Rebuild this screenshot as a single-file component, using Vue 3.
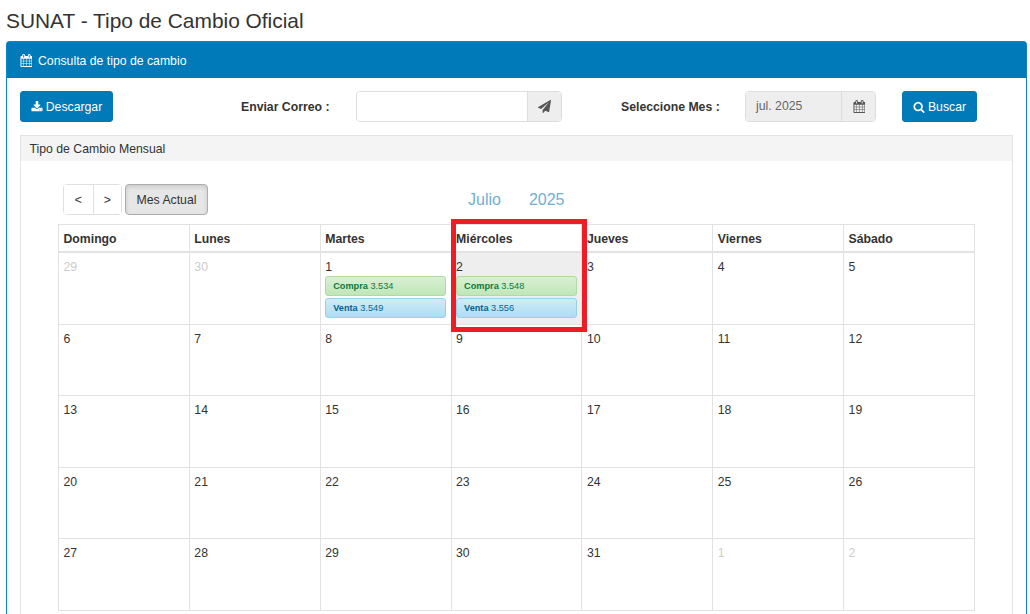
<script setup>
const days = ['Domingo', 'Lunes', 'Martes', 'Miércoles', 'Jueves', 'Viernes', 'Sábado']
const rates = {
  1: { compra: '3.534', venta: '3.549' },
  2: { compra: '3.548', venta: '3.556' }
}
const cell = (n, muted = false) => ({ n, muted, today: n === 2 && !muted, rate: muted ? null : rates[n] })
const weeks = [
  [cell(29, true), cell(30, true), cell(1), cell(2), cell(3), cell(4), cell(5)],
  [6, 7, 8, 9, 10, 11, 12].map((n) => cell(n)),
  [13, 14, 15, 16, 17, 18, 19].map((n) => cell(n)),
  [20, 21, 22, 23, 24, 25, 26].map((n) => cell(n)),
  [cell(27), cell(28), cell(29), cell(30), cell(31), cell(1, true), cell(2, true)]
]
const calendarPath = 'M192 1664h288v-288h-288v288zm352 0h320v-288h-320v288zm-352-352h288v-320h-288v320zm352 0h320v-320h-320v320zm-352-384h288v-288h-288v288zm736 736h320v-288h-320v288zm-384-736h320v-288h-320v288zm768 736h288v-288h-288v288zm-384-352h320v-320h-320v320zm-352-864v-288q0-13-9.500-22.500t-22.500-9.500h-64q-13 0-22.500 9.500t-9.500 22.500v288q0 13 9.500 22.500t22.500 9.500h64q13 0 22.500-9.500t9.500-22.500zm736 864h288v-320h-288v320zm-384-384h320v-288h-320v288zm384 0h288v-288h-288v288zm32-480v-288q0-13-9.500-22.500t-22.500-9.500h-64q-13 0-22.500 9.500t-9.500 22.500v288q0 13 9.500 22.500t22.500 9.500h64q13 0 22.500-9.500t9.500-22.500zm384-64v1280q0 52-38 90t-90 38h-1408q-52 0-90-38t-38-90v-1280q0-52 38-90t90-38h128v-96q0-66 47-113t113-47h64q66 0 113 47t47 113v96h384v-96q0-66 47-113t113-47h64q66 0 113 47t47 113v96h128q52 0 90 38t38 90z'
const downloadPath = 'M1344 1344q0-26-19-45t-45-19-45 19-19 45 19 45 45 19 45-19 19-45zm256 0q0-26-19-45t-45-19-45 19-19 45 19 45 45 19 45-19 19-45zm128-224v320q0 40-28 68t-68 28h-1472q-40 0-68-28t-28-68v-320q0-40 28-68t68-28h465l135 136q58 56 136 56t136-56l136-136h464q40 0 68 28t28 68zm-325-569q17 41-14 70l-448 448q-18 19-45 19t-45-19l-448-448q-31-29-14-70 17-39 59-39h256v-448q0-26 19-45t45-19h256q26 0 45 19t19 45v448h256q42 0 59 39z'
const planePath = 'M1764 11q33 24 27 64l-256 1536q-5 29-32 45-14 8-31 8-11 0-24-5l-453-185-242 295q-18 23-49 23-13 0-22-4-19-7-30.500-23.500t-11.500-36.500v-349l864-1059-1069 925-395-162q-37-14-40-55-2-40 32-59l1664-960q15-9 32-9 20 0 36 11z'
const searchPath = 'M1216 832q0-185-131.500-316.500t-316.500-131.500-316.500 131.500-131.500 316.500 131.500 316.500 316.500 131.500 316.500-131.500 131.500-316.500zm512 832q0 52-38 90t-90 38q-54 0-90-38l-343-342q-179 124-399 124-143 0-273.500-55.500t-225-150-150-225-55.500-273.500 55.500-273.500 150-225 225-150 273.500-55.500 273.500 55.500 225 150 150 225 55.500 273.500q0 220-124 399l343 343q37 37 37 90z'
</script>

<template>
  <div class="page">
    <h1 class="title">SUNAT - Tipo de Cambio Oficial</h1>
    <section class="panel">
      <header class="panel-head">
        <svg class="ico" viewBox="0 0 1664 1792" width="12" height="13"><path :d="calendarPath" /></svg>
        <span>Consulta de tipo de cambio</span>
      </header>
      <div class="panel-body">
        <div class="toolbar">
          <button class="btn-primary descargar">
            <svg class="ico" viewBox="0 0 1792 1792" width="12" height="12"><path :d="downloadPath" /></svg>
            Descargar
          </button>
          <label class="lbl lbl-mail">Enviar Correo :</label>
          <div class="group group-mail">
            <div class="field"></div>
            <span class="addon"><svg class="ico" viewBox="0 0 1792 1792" width="13" height="13"><path :d="planePath" /></svg></span>
          </div>
          <label class="lbl lbl-month">Seleccione Mes :</label>
          <div class="group group-month">
            <div class="field readonly">jul. 2025</div>
            <span class="addon"><svg class="ico" viewBox="0 0 1664 1792" width="12" height="13"><path :d="calendarPath" /></svg></span>
          </div>
          <button class="btn-primary buscar">
            <svg class="ico" viewBox="0 0 1792 1792" width="12" height="12"><path :d="searchPath" /></svg>
            Buscar
          </button>
        </div>

        <section class="inner">
          <header class="inner-head">Tipo de Cambio Mensual</header>
          <div class="inner-body">
            <div class="cal-toolbar">
              <div class="nav">
                <button class="nav-btn">&lt;</button>
                <button class="nav-btn">&gt;</button>
              </div>
              <button class="today-btn">Mes Actual</button>
              <div class="cal-title"><span>Julio</span><span>2025</span></div>
            </div>
            <div class="cal-wrap">
              <table class="cal">
                <thead>
                  <tr><th v-for="d in days" :key="d">{{ d }}</th></tr>
                </thead>
                <tbody>
                  <tr v-for="(w, i) in weeks" :key="i">
                    <td v-for="(c, j) in w" :key="j" :class="{ today: c.today }">
                      <div class="num" :class="{ muted: c.muted }">{{ c.n }}</div>
                      <template v-if="c.rate">
                        <div class="ev green"><b>Compra</b> {{ c.rate.compra }}</div>
                        <div class="ev blue"><b>Venta</b> {{ c.rate.venta }}</div>
                      </template>
                    </td>
                  </tr>
                </tbody>
              </table>
              <div class="highlight"></div>
            </div>
          </div>
        </section>
      </div>
    </section>
  </div>
</template>

<style>
html, body { overflow: hidden; background: #fff; }
</style>

<style scoped>
.page {
  width: 1030px;
  height: 614px;
  overflow: hidden;
  box-sizing: border-box;
  padding: 0 3px 0 6px;
  font-family: "Liberation Sans", Arial, sans-serif;
  font-size: 12.25px;
  color: #333;
}
.title {
  margin: 0;
  height: 41px;
  line-height: 42px;
  font-size: 20.9px;
  font-weight: 400;
  color: #333;
}
.ico { fill: currentColor; display: inline-block; flex: none; }
.panel {
  border: 1px solid #0a85c7;
  border-radius: 4px 4px 0 0;
  border-bottom: 0;
  height: 600px;
}
.panel-head {
  box-sizing: border-box;
  height: 36px;
  background: #007ab8;
  color: #fff;
  display: flex;
  align-items: center;
  gap: 6px;
  padding: 1px 0 0 13px;
  font-size: 12.25px;
}
.panel-body { padding: 13px 13px 0; }
.toolbar { display: flex; align-items: center; height: 31px; }
.btn-primary {
  display: flex;
  align-items: center;
  justify-content: center;
  gap: 3px;
  height: 31px;
  padding: 0;
  border: 1px solid #0a78b0;
  border-radius: 3px;
  background: #007ab8;
  color: #fff;
  font: 12.25px "Liberation Sans", Arial, sans-serif;
}
.descargar { width: 93px; }
.buscar { width: 75px; margin-left: 26px; }
.lbl { font-weight: 700; font-size: 12.25px; color: #333; white-space: nowrap; }
.lbl-mail { margin-left: 128px; width: 115px; }
.lbl-month { margin-left: 59px; width: 124px; }
.group { display: flex; height: 31px; box-sizing: border-box; border: 1px solid #ddd; border-radius: 4px; overflow: hidden; }
.group-mail { width: 206px; }
.group-month { width: 131px; }
.field { flex: 1; background: #fff; box-sizing: border-box; padding-left: 10px; line-height: 29px; font-size: 12.25px; color: #666; }
.field.readonly { background: #eee; }
.addon { width: 33px; display: flex; align-items: center; justify-content: center; background: #eee; border-left: 1px solid #ddd; color: #555; }
.inner { margin-top: 13px; border: 1px solid #e3e3e3; border-bottom: 0; height: 600px; }
.inner-head { height: 25px; line-height: 26px; background: #f4f4f4; padding-left: 8.500px; font-size: 12.25px; }
.inner-body { padding: 23px 38px 0 37px; }
.cal-toolbar { position: relative; display: flex; align-items: center; height: 31px; margin-left: 5px; }
.nav { display: flex; border: 1px solid #e0e0e0; border-radius: 4px; height: 31px; box-sizing: border-box; }
.nav-btn { width: 28.5px; border: 0; padding: 0; background: #fff; color: #333; font: 12.25px "Liberation Sans", Arial, sans-serif; }
.nav-btn + .nav-btn { border-left: 1px solid #e0e0e0; }
.today-btn {
  margin-left: 3px;
  width: 83px;
  height: 31px;
  border: 1px solid #adadad;
  border-radius: 4px;
  background: #e6e6e6;
  box-shadow: inset 0 2px 4px rgba(0,0,0,.125);
  color: #333;
  font: 12.25px "Liberation Sans", Arial, sans-serif;
}
.cal-title { position: absolute; left: 405px; top: 0; display: flex; gap: 28px; line-height: 31px; font-size: 16px; color: #6fafd7; }
.cal-wrap { position: relative; margin-top: 9px; }
.cal { border-collapse: collapse; table-layout: fixed; width: 917px; }
.cal th, .cal td { border: 1px solid #e2e2e2; padding: 0; vertical-align: top; text-align: left; }
.cal th { height: 24px; border-bottom-width: 2px; padding: 2px 0 0 4.500px; font-size: 12.25px; font-weight: 700; line-height: 24px; color: #333; }
.cal td { height: 70.6px; }
.cal td.today { background: #eee; }
.num { padding: 7px 0 0 4.500px; line-height: 15px; font-size: 12.25px; color: #333; height: 15px; }
.num.muted { color: #ccc; }
.ev {
  box-sizing: border-box;
  height: 20px;
  margin: 1px 4.500px 1.500px 4px;
  border-radius: 3px;
  padding-left: 7.500px;
  line-height: 18px;
  font-size: 9.2px;
}
.ev b { font-weight: 700; }
.green { background: linear-gradient(#d9f0d3, #c0e6b8); border: 1px solid #aedb9f; color: #0d7a3c; }
.blue { background: linear-gradient(#cfecf8, #aeddf1); border: 1px solid #93d2ee; color: #08648f; }
.highlight { position: absolute; left: 393px; top: -5px; width: 136px; height: 113px; box-sizing: border-box; border: 5px solid #ee1c25; pointer-events: none; }
</style>
